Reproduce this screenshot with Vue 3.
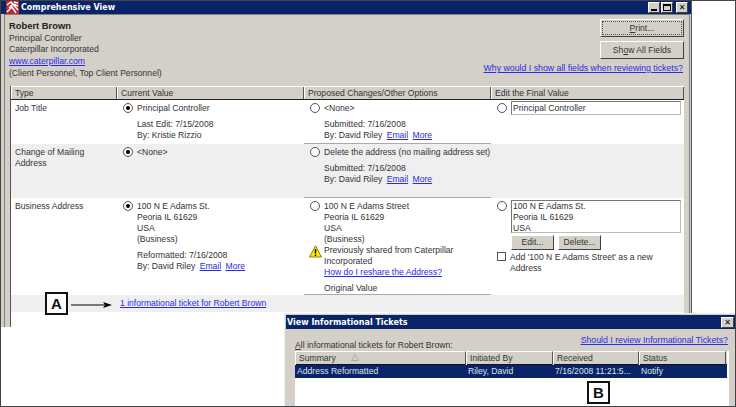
<template>
  <div class="shot">
    <div class="win">
      <div class="titlebar">
        <svg class="appicon" width="13" height="13" viewBox="0 0 13 13">
          <rect width="13" height="13" fill="#c8242c" />
          <path d="M1 4 L5 1 L12 9 M3 7 L7 3 L12 5 M1 11 L6 6 L10 12 M8 1 L12 2" stroke="#fff" stroke-width="1.5" fill="none" />
        </svg>
        <span class="title">Comprehensive View</span>
        <div class="winbtns">
          <span class="wbtn"><i class="min"></i></span>
          <span class="wbtn"><i class="max"></i></span>
          <span class="wbtn close">✕</span>
        </div>
      </div>

      <div class="body">
        <div class="info">
          <div class="person">
            <div class="name">Robert Brown</div>
            <div>Principal Controller</div>
            <div>Caterpillar Incorporated</div>
            <div><a>www.caterpillar.com</a></div>
            <div>(Client Personnel, Top Client Personnel)</div>
          </div>
          <div class="actions">
            <button class="btn big focus"><u>P</u>rint...</button>
            <button class="btn big">Sh<u>o</u>w All Fields</button>
            <a class="why">Why would I show all fields when reviewing tickets?</a>
          </div>
        </div>

        <div class="grid">
          <div class="head">
            <span v-for="h in heads" :key="h">{{ h }}</span>
          </div>

          <div class="row row1">
            <div class="type">Job Title</div>
            <div class="cell">
              <i class="radio on"></i>
              <div>
                <div>Principal Controller</div>
                <div class="meta">Last Edit: 7/15/2008<br />By: Kristie Rizzio</div>
              </div>
            </div>
            <div class="cell prop">
              <i class="radio"></i>
              <div>
                <div>&lt;None&gt;</div>
                <div class="meta">Submitted: 7/16/2008<br />By: David Riley <a>Email</a> <a>More</a></div>
              </div>
            </div>
            <div class="cell">
              <i class="radio"></i>
              <div class="input">Principal Controller</div>
            </div>
          </div>

          <div class="row row2 alt">
            <div class="type">Change of Mailing<br />Address</div>
            <div class="cell">
              <i class="radio on"></i>
              <div>&lt;None&gt;</div>
            </div>
            <div class="cell prop">
              <i class="radio"></i>
              <div>
                <div>Delete the address (no mailing address set)</div>
                <div class="meta">Submitted: 7/16/2008<br />By: David Riley <a>Email</a> <a>More</a></div>
              </div>
            </div>
            <div class="cell"></div>
          </div>

          <div class="row row3">
            <div class="type">Business Address</div>
            <div class="cell">
              <i class="radio on"></i>
              <div>
                <div>100 N E Adams St.<br />Peoria IL 61629<br />USA<br />(Business)</div>
                <div class="meta">Reformatted: 7/16/2008<br />By: David Riley <a>Email</a> <a>More</a></div>
              </div>
            </div>
            <div class="cell prop">
              <i class="radio"></i>
              <div class="propaddr">
                <div>100 N E Adams Street<br />Peoria IL 61629<br />USA<br />(Business)</div>
                <svg class="warn" width="13" height="13" viewBox="0 0 13 13">
                  <path d="M6.5 .8 L12.5 12 H.5 Z" fill="#ffe800" stroke="#6b6000" stroke-width=".8" />
                  <path d="M6.5 4 V8.5 M6.5 9.6 V11" stroke="#000" stroke-width="1.4" />
                </svg>
                <div>Previously shared from Caterpillar<br />Incorporated</div>
                <div><a>How do I reshare the Address?</a></div>
                <div class="orig">Original Value</div>
              </div>
            </div>
            <div class="cell">
              <i class="radio"></i>
              <div class="edit">
                <div class="textarea">100 N E Adams St.<br />Peoria IL 61629<br />USA</div>
                <div class="editbtns">
                  <button class="btn small">Edit...</button>
                  <button class="btn small">Delete...</button>
                </div>
                <label class="check"><i class="box"></i><span>Add '100 N E Adams Street' as a new<br />Address</span></label>
              </div>
            </div>
          </div>

          <div class="ticketrow alt"><a>1 informational ticket for Robert Brown</a></div>
        </div>
      </div>
    </div>

    <div class="popup">
      <div class="poptitle">
        <span class="title">View Informational Tickets</span>
        <span class="wbtn close">✕</span>
      </div>
      <div class="popbody">
        <div class="poptop">
          <span class="alltext"><u>A</u>ll informational tickets for Robert Brown:</span>
          <a>Should I review Informational Tickets?</a>
        </div>
        <div class="list">
          <div class="listhead">
            <span>Summary<svg width="8" height="7" viewBox="0 0 8 7"><path d="M4 .5 L7.5 6.5 H.5 Z" fill="none" stroke="#aaa" /></svg></span>
            <span>Initiated By</span>
            <span>Received</span>
            <span>Status</span>
          </div>
          <div class="listrow">
            <span>Address Reformatted</span>
            <span>Riley, David</span>
            <span>7/16/2008 11:21:5...</span>
            <span>Notify</span>
          </div>
        </div>
      </div>
    </div>

    <div class="badge a">A</div>
    <svg class="arrow" width="42" height="8" viewBox="0 0 42 8">
      <path d="M0 4 H36" stroke="#000" />
      <path d="M32 1 L41 4 L32 7 L34 4 Z" fill="#000" />
    </svg>
    <div class="badge b">B</div>
  </div>
</template>

<script setup>
const heads = ['Type', 'Current Value', 'Proposed Changes/Other Options', 'Edit the Final Value']
</script>

<style>
html, body { margin: 0; background: #fff; }
</style>

<style scoped>
.shot {
  position: relative;
  width: 736px;
  height: 407px;
  box-sizing: border-box;
  border: 1px solid #444;
  background: #fff;
  overflow: hidden;
  font: 8.6px/11px "Liberation Sans", Arial, sans-serif;
  color: #333;
}
a {
  color: #2a2ae8;
  text-decoration: underline;
}
u { text-decoration: underline; }
.win {
  width: 691px;
  height: 326px;
  box-sizing: border-box;
  background: #d4d0c8;
  border-right: 1px solid #555;
  display: flex;
  flex-direction: column;
}
.titlebar {
  flex: none;
  height: 13px;
  background: #0a246a;
  display: flex;
  align-items: center;
  padding-left: 5px;
}
.appicon { flex: none; }
.title {
  margin-left: 2px;
  color: #fff;
  font: bold 8px/13px "DejaVu Sans", sans-serif;
}
.winbtns {
  margin-left: auto;
  margin-right: 3px;
  display: flex;
  gap: 1px;
}
.wbtn {
  width: 12px;
  height: 11px;
  box-sizing: border-box;
  background: #d4d0c8;
  border: 1px solid;
  border-color: #fff #404040 #404040 #fff;
  display: flex;
  align-items: center;
  justify-content: center;
  color: #000;
  position: relative;
}
.wbtn.close {
  margin-left: 2px;
  font: bold 8px/9px "DejaVu Sans", sans-serif;
}
.min {
  position: absolute;
  left: 2px;
  bottom: 1px;
  width: 6px;
  height: 2px;
  background: #000;
}
.max {
  width: 8px;
  height: 7px;
  box-sizing: border-box;
  border: 1px solid #000;
  border-top-width: 2px;
}
.body {
  flex: 1;
  display: flex;
  flex-direction: column;
  margin: 0 1px 0 3px;
  border: 1px solid #808080;
  border-bottom: 0;
  padding: 0 5px 0 4px;
  min-height: 0;
}
.info {
  flex: none;
  height: 71px;
  display: flex;
  justify-content: space-between;
  box-sizing: border-box;
}
.person {
  padding-top: 5px;
  line-height: 11.7px;
}
.name {
  font-weight: bold;
  font-size: 9.4px;
  color: #222;
  margin-bottom: 1px;
}
.actions {
  display: flex;
  flex-direction: column;
  align-items: flex-end;
  padding-top: 4px;
}
.btn {
  box-sizing: border-box;
  padding: 0;
  background: #d4d0c8;
  border: 1px solid;
  border-color: #fff #404040 #404040 #fff;
  font: inherit;
  color: #333;
}
.big {
  width: 84px;
  height: 18px;
  margin-bottom: 4px;
}
.focus {
  outline: 1px dotted #555;
  outline-offset: -3px;
}
.why {
  margin: 0 1px 0 0;
  font-size: 8.75px;
}
.grid {
  flex: 1;
  background: #fff;
  border-left: 1px solid #555;
  margin-left: 1px;
  min-height: 0;
}
.head {
  display: grid;
  grid-template-columns: 106px 187px 187px 1fr;
  height: 14px;
  background: #d4d0c8;
  border-top: 1px solid #fff;
  border-bottom: 1px solid #222;
  box-sizing: border-box;
}
.head span {
  padding-left: 3px;
  line-height: 12px;
  border-right: 1px solid #555;
  border-left: 1px solid #fff;
}
.row {
  display: grid;
  grid-template-columns: 106px 187px 187px 1fr;
}
.row1 { height: 44px; }
.row2 { height: 54px; }
.row3 { height: 97px; }
.alt { background: #efefef; }
.type { padding: 3px 0 0 4px; }
.cell {
  display: flex;
  gap: 4px;
  padding: 3px 0 0 6px;
}
.prop { border-bottom: 1px solid #aaa; box-sizing: border-box; }
.radio {
  flex: none;
  position: relative;
  width: 10px;
  height: 10px;
  box-sizing: border-box;
  border: 1px solid #555;
  border-radius: 50%;
  background: #fff;
}
.radio.on::after {
  content: "";
  position: absolute;
  left: 2px;
  top: 2px;
  width: 4px;
  height: 4px;
  border-radius: 50%;
  background: #000;
}
.meta { margin-top: 5px; }
.meta a { margin-left: 2px; }
.input {
  width: 170px;
  height: 14px;
  margin-top: -2px;
  box-sizing: border-box;
  border: 1px solid;
  border-color: #777 #bbb #bbb #777;
  padding-left: 1px;
  line-height: 12px;
  background: #fff;
}
.propaddr { position: relative; flex: 1; }
.warn {
  position: absolute;
  left: -15px;
  top: 44px;
}
.orig { margin-top: 5px; }
.edit { flex: 1; }
.textarea {
  width: 170px;
  height: 33px;
  margin-top: -1px;
  box-sizing: border-box;
  border: 1px solid;
  border-color: #777 #bbb #bbb #777;
  padding-left: 1px;
  overflow: hidden;
}
.editbtns {
  display: flex;
  gap: 4px;
  margin: 2px 0 2px 0;
}
.small {
  width: 43px;
  height: 15px;
}
.check {
  display: flex;
  gap: 4px;
  margin-left: -14px;
}
.box {
  flex: none;
  width: 9px;
  height: 9px;
  box-sizing: border-box;
  border: 1px solid #555;
  background: #fff;
}
.ticketrow {
  height: 17px;
  padding-left: 109px;
  line-height: 17px;
}
.popup {
  position: absolute;
  left: 283px;
  top: 312px;
  width: 452px;
  height: 94px;
  box-sizing: border-box;
  background: #d4d0c8;
  border: 1px solid #eee;
  border-width: 1px 0 0 1px;
  padding: 1px 0 0 1px;
}
.poptitle {
  height: 14px;
  background: #0a246a;
  display: flex;
  align-items: center;
  justify-content: space-between;
  padding-right: 2px;
}
.poptitle .title { margin-left: 1px; }
.poptitle .wbtn { width: 13px; margin-left: 0; }
.popbody { padding: 2px 7px 0 9px; }
.poptop {
  height: 20px;
  display: flex;
  justify-content: space-between;
  line-height: 20px;
}
.alltext { padding-top: 4px; }
.poptop a {
  line-height: 18px;
  font-size: 8.75px;
  margin-right: 1px;
}
.list {
  height: 60px;
  background: #fff;
}
.listhead, .listrow {
  display: grid;
  grid-template-columns: 171px 87px 86px 87px;
  width: 432px;
}
.listhead {
  height: 14px;
  border-bottom: 1px solid #111;
  box-sizing: border-box;
  background: #d4d0c8;
}
.listhead span {
  padding-left: 3px;
  line-height: 13px;
  border-left: 1px solid #fff;
  border-right: 1px solid #555;
  border-top: 1px solid #fff;
}
.listhead svg { margin-left: 15px; }
.listrow {
  height: 13px;
  background: #0a246a;
  color: #dfe3ee;
  line-height: 13px;
}
.listrow span { padding-left: 2px; white-space: nowrap; }
.badge {
  position: absolute;
  width: 23px;
  height: 23px;
  box-sizing: border-box;
  border: 2px solid #111;
  background: #fff;
  color: #111;
  text-align: center;
  font: bold 15px/19px "Liberation Sans", Arial, sans-serif;
}
.badge.a { left: 44px; top: 291px; }
.badge.b { left: 586px; top: 380px; }
.arrow {
  position: absolute;
  left: 70px;
  top: 300px;
}
</style>
